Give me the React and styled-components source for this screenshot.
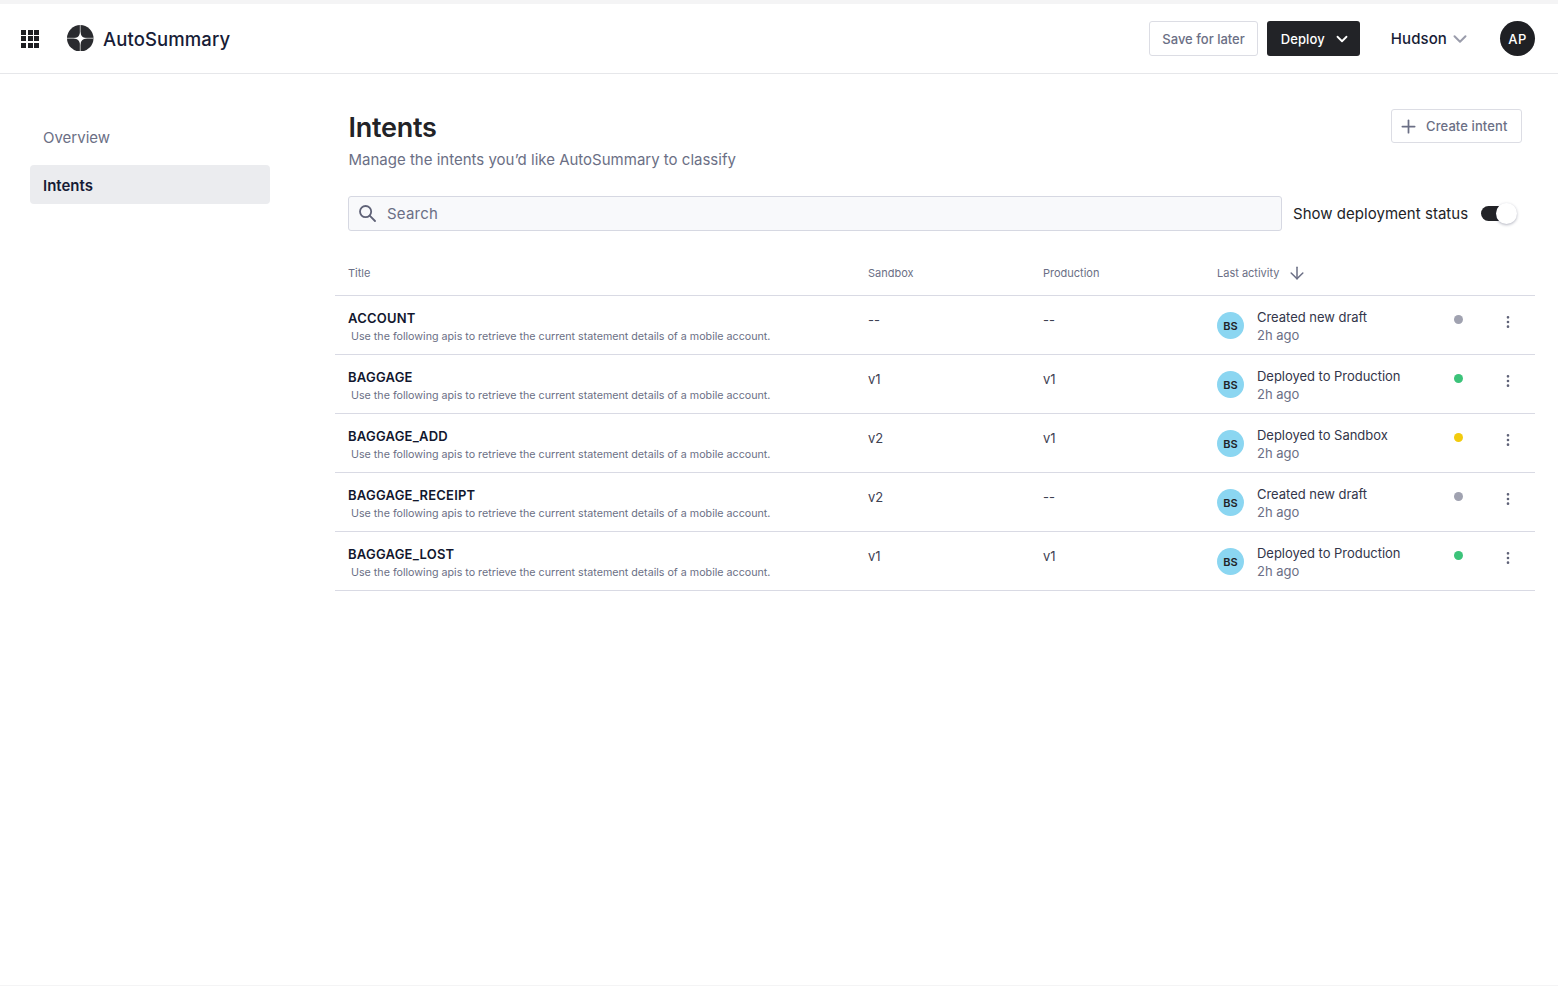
import React from "react";
import styled, { createGlobalStyle } from "styled-components";
import { Plus, ChevronDown, ArrowDown, MoreVertical } from "lucide-react";

const GlobalStyle = createGlobalStyle`
  html, body {
    margin: 0;
    padding: 0;
    background: #ffffff;
    font-family: Inter, "Liberation Sans", sans-serif;
    color: #12172e;
  }
  * {
    box-sizing: border-box;
  }
`;

const Page = styled.div`
  height: 986px;
  width: 1558px;
  overflow: hidden;
  border-top: 4px solid #f4f4f5;
  border-bottom: 1px solid #f4f4f5;
`;

const Header = styled.header`
  height: 70px;
  border-bottom: 1px solid #e6e7ea;
  display: flex;
  align-items: center;
  padding: 0 23px 0 21px;
`;

const AppGrid = styled.div`
  display: grid;
  grid-template-columns: repeat(3, 5px);
  gap: 1.5px;
  margin-right: 28px;
  span {
    width: 5px;
    height: 5px;
    background: #1d1e22;
  }
`;

const LogoMark = styled.svg`
  margin-top: -1px;
  flex: none;
`;

const Brand = styled.div`
  font-size: 18.5px;
  font-weight: 500;
  color: #171c36;
  margin: 1px 0 0 9.5px;
  letter-spacing: 0.1px;
`;

const HeaderRight = styled.div`
  margin-left: auto;
  display: flex;
  align-items: center;
`;

const OutlineButton = styled.button`
  height: 35px;
  background: #ffffff;
  border: 1px solid #dcdde4;
  border-radius: 3px;
  display: flex;
  align-items: center;
  font-family: inherit;
  font-size: 13px;
  font-weight: 500;
  color: #6b6f85;
  padding: 0 12px;
`;

const DeployButton = styled.button`
  height: 35px;
  width: 93px;
  margin-left: 9px;
  background: #222327;
  border: none;
  border-radius: 3px;
  display: flex;
  align-items: center;
  justify-content: space-between;
  font-family: inherit;
  font-size: 13px;
  font-weight: 500;
  letter-spacing: 0.1px;
  color: #ffffff;
  padding: 0 9px 0 14px;
`;

const Workspace = styled.div`
  display: flex;
  align-items: center;
  font-size: 15px;
  font-weight: 500;
  color: #171c36;
  margin-left: 31px;
  gap: 2px;
  letter-spacing: 0.1px;
  svg {
    color: #9a9cab;
  }
`;

const Avatar = styled.div`
  width: 35px;
  height: 35px;
  margin-left: 29px;
  border-radius: 50%;
  background: #1f2024;
  color: #ffffff;
  font-size: 13px;
  font-weight: 500;
  letter-spacing: 0.5px;
  display: flex;
  align-items: center;
  justify-content: center;
`;

const Body = styled.div`
  display: flex;
`;

const Sidebar = styled.nav`
  width: 335px;
  padding: 43px 0 0 29.5px;
  display: flex;
  flex-direction: column;
  gap: 9px;
`;

const NavItem = styled.div`
  width: 240px;
  height: 39px;
  display: flex;
  align-items: center;
  padding: 1px 0 0 13.5px;
  border-radius: 4px;
  font-size: 15px;
  background: ${(p) => (p.$active ? "#ebecef" : "transparent")};
  color: ${(p) => (p.$active ? "#171c36" : "#6b6f85")};
  font-weight: ${(p) => (p.$active ? 600 : 400)};
`;

const Main = styled.main`
  width: 1200px;
`;

const TitleRow = styled.div`
  display: flex;
  justify-content: space-between;
  align-items: flex-start;
  padding: 36px 13px 0 13.5px;
`;

const Heading = styled.h1`
  margin: 0;
  font-size: 27px;
  line-height: 36px;
  font-weight: 600;
  letter-spacing: -0.25px;
  color: #222327;
`;

const Subheading = styled.p`
  margin: 4px 0 0;
  font-size: 15px;
  line-height: 19px;
  color: #6b6f85;
`;

const CreateButton = styled(OutlineButton)`
  width: 131px;
  height: 34px;
  padding: 0 0 0 6px;
  gap: 7px;
  margin-top: -1px;
  letter-spacing: 0.1px;
  svg {
    color: #6b6f85;
  }
`;

const FilterRow = styled.div`
  display: flex;
  align-items: center;
  margin: 27px 0 0 13px;
`;

const SearchBox = styled.div`
  width: 934px;
  height: 35px;
  background: #f8f9fb;
  border: 1px solid #d6d8e2;
  border-radius: 3px;
  display: flex;
  align-items: center;
  gap: 11px;
  padding-left: 10px;
  font-size: 15px;
  color: #6b6f85;
  letter-spacing: 0.2px;
`;

const ToggleLabel = styled.span`
  margin-left: 11px;
  font-size: 15px;
  letter-spacing: 0.03px;
  color: #222327;
`;

const Toggle = styled.div`
  position: relative;
  width: 32px;
  height: 15px;
  margin-left: 13px;
  border-radius: 8px;
  background: #222327;
`;

const Knob = styled.div`
  position: absolute;
  top: -3px;
  right: -4px;
  width: 21px;
  height: 21px;
  border-radius: 50%;
  background: #ffffff;
  box-shadow: 0 1px 3px rgba(30, 35, 70, 0.35);
`;

const Row = styled.div`
  display: grid;
  grid-template-columns: 520px 175px 174px 237px 46px 1fr;
  padding-left: 13px;
  border-bottom: 1px solid #d9dae4;
`;

const HeadRow = styled(Row)`
  margin-top: 24px;
  height: 41px;
  padding-bottom: 4px;
  align-items: center;
  font-size: 11px;
  color: #6b6f85;
`;

const SortCell = styled.div`
  display: flex;
  align-items: center;
  gap: 8px;
  svg {
    color: #6b6f85;
  }
`;

const DataRow = styled(Row)`
  height: 59px;
`;

const TitleCell = styled.div`
  padding-top: 14px;
`;

const IntentName = styled.div`
  font-size: 13px;
  line-height: 16px;
  font-weight: 600;
  letter-spacing: 0.22px;
  color: #12172e;
`;

const IntentDesc = styled.div`
  font-size: 10.7px;
  line-height: 14px;
  margin: 4px 0 0 3px;
  color: #6b6f85;
`;

const VersionCell = styled.div`
  padding-top: 15px;
  font-size: 13px;
  line-height: 18px;
  color: #3e4152;
`;

const ActivityCell = styled.div`
  display: flex;
  align-items: flex-start;
  gap: 13px;
  padding-top: 12px;
`;

const UserBadge = styled.div`
  width: 27px;
  height: 27px;
  margin-top: 4px;
  border-radius: 50%;
  background: #8bd6f1;
  color: #222327;
  font-size: 11px;
  font-weight: 600;
  display: flex;
  align-items: center;
  justify-content: center;
  flex: none;
`;

const ActivityText = styled.div`
  font-size: 13px;
  line-height: 18px;
  letter-spacing: -0.03px;
  color: #33364a;
`;

const Ago = styled.div`
  color: #6b6f85;
`;

const DotCell = styled.div`
  padding-top: 18.5px;
`;

const Dot = styled.div`
  width: 9px;
  height: 9px;
  border-radius: 50%;
  background: ${(p) => p.$color};
`;

const MenuCell = styled.div`
  padding-top: 18px;
  color: #5f6277;
  svg {
    display: block;
  }
`;

const STATUS = {
  draft: { text: "Created new draft", color: "#a0a2b0" },
  prod: { text: "Deployed to Production", color: "#3cc37a" },
  sandbox: { text: "Deployed to Sandbox", color: "#f2cb0e" },
};

const intents = [
  { name: "ACCOUNT", sandbox: "--", production: "--", status: "draft" },
  { name: "BAGGAGE", sandbox: "v1", production: "v1", status: "prod" },
  { name: "BAGGAGE_ADD", sandbox: "v2", production: "v1", status: "sandbox" },
  { name: "BAGGAGE_RECEIPT", sandbox: "v2", production: "--", status: "draft" },
  { name: "BAGGAGE_LOST", sandbox: "v1", production: "v1", status: "prod" },
];

const Logo = () => (
  <LogoMark width="26.5" height="26.5" viewBox="0 0 27 27">
    <circle cx="13.5" cy="13.5" r="13.5" fill="#2a2b2f" />
    <path d="M13.5 0v27M0 13.5h27" stroke="#ffffff" strokeWidth="0.9" opacity="0.75" />
    <path
      d="M13.5 6.5C14 11 16 13 20.5 13.5 16 14 14 16 13.5 20.5 13 16 11 14 6.5 13.5 11 13 13 11 13.5 6.5Z"
      fill="#ffffff"
    />
  </LogoMark>
);

const SearchIcon = () => (
  <svg width="17" height="17" viewBox="0 0 17 17" fill="none" stroke="#5f6277" strokeWidth="1.8">
    <circle cx="6.6" cy="6.6" r="5.6" />
    <path d="M10.7 10.7L16 16" strokeLinecap="round" />
  </svg>
);

const App = () => {
  return (
    <Page>
      <GlobalStyle />
      <Header>
        <AppGrid>
          {Array.from({ length: 9 }).map((_, i) => (
            <span key={i} />
          ))}
        </AppGrid>
        <Logo />
        <Brand>AutoSummary</Brand>
        <HeaderRight>
          <OutlineButton>Save for later</OutlineButton>
          <DeployButton>
            Deploy
            <ChevronDown size={18} strokeWidth={2.4} />
          </DeployButton>
          <Workspace>
            Hudson
            <ChevronDown size={22} strokeWidth={2.2} />
          </Workspace>
          <Avatar>AP</Avatar>
        </HeaderRight>
      </Header>
      <Body>
        <Sidebar>
          <NavItem>Overview</NavItem>
          <NavItem $active>Intents</NavItem>
        </Sidebar>
        <Main>
          <TitleRow>
            <div>
              <Heading>Intents</Heading>
              <Subheading>Manage the intents you’d like AutoSummary to classify</Subheading>
            </div>
            <CreateButton>
              <Plus size={21} strokeWidth={2} />
              Create intent
            </CreateButton>
          </TitleRow>
          <FilterRow>
            <SearchBox>
              <SearchIcon />
              Search
            </SearchBox>
            <ToggleLabel>Show deployment status</ToggleLabel>
            <Toggle>
              <Knob />
            </Toggle>
          </FilterRow>
          <HeadRow>
            <div>Title</div>
            <div>Sandbox</div>
            <div>Production</div>
            <SortCell>
              Last activity
              <ArrowDown size={20} strokeWidth={1.8} />
            </SortCell>
          </HeadRow>
          {intents.map((item) => (
            <DataRow key={item.name}>
              <TitleCell>
                <IntentName>{item.name}</IntentName>
                <IntentDesc>
                  Use the following apis to retrieve the current statement details of a mobile account.
                </IntentDesc>
              </TitleCell>
              <VersionCell>{item.sandbox}</VersionCell>
              <VersionCell>{item.production}</VersionCell>
              <ActivityCell>
                <UserBadge>BS</UserBadge>
                <ActivityText>
                  {STATUS[item.status].text}
                  <Ago>2h ago</Ago>
                </ActivityText>
              </ActivityCell>
              <DotCell>
                <Dot $color={STATUS[item.status].color} />
              </DotCell>
              <MenuCell>
                <MoreVertical size={16} strokeWidth={2} />
              </MenuCell>
            </DataRow>
          ))}
        </Main>
      </Body>
    </Page>
  );
};

export default App;
